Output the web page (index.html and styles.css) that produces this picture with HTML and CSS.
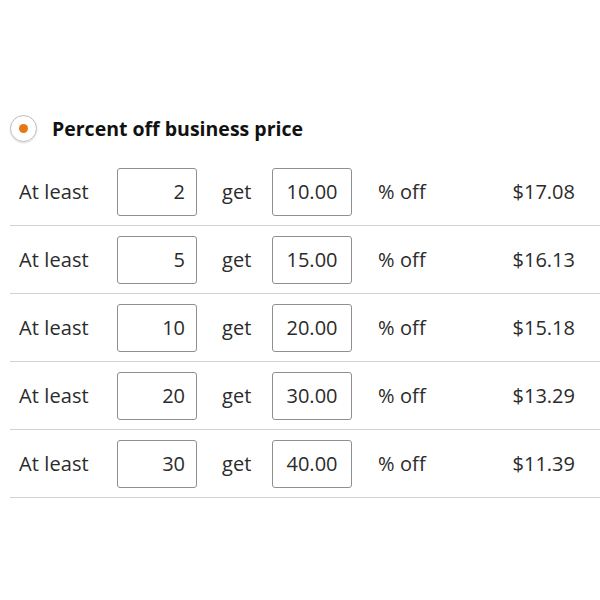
FILE: index.html
```html
<!DOCTYPE html>
<html lang="en">
<head>
  <meta charset="UTF-8">
  <title>Quantity discounts</title>
  <link rel="stylesheet" href="styles.css">
</head>
<body>
  <div class="panel">
    <label class="option">
      <span class="radio"><span class="dot"></span></span>
      <span class="option-title">Percent off business price</span>
    </label>

    <div class="tiers">
      <div class="tier">
        <span class="lbl">At least</span>
        <input class="box qty" type="text" value="2">
        <span class="lbl get">get</span>
        <input class="box pct" type="text" value="10.00">
        <span class="lbl off">% off</span>
        <span class="price">$17.08</span>
      </div>
      <div class="tier">
        <span class="lbl">At least</span>
        <input class="box qty" type="text" value="5">
        <span class="lbl get">get</span>
        <input class="box pct" type="text" value="15.00">
        <span class="lbl off">% off</span>
        <span class="price">$16.13</span>
      </div>
      <div class="tier">
        <span class="lbl">At least</span>
        <input class="box qty" type="text" value="10">
        <span class="lbl get">get</span>
        <input class="box pct" type="text" value="20.00">
        <span class="lbl off">% off</span>
        <span class="price">$15.18</span>
      </div>
      <div class="tier">
        <span class="lbl">At least</span>
        <input class="box qty" type="text" value="20">
        <span class="lbl get">get</span>
        <input class="box pct" type="text" value="30.00">
        <span class="lbl off">% off</span>
        <span class="price">$13.29</span>
      </div>
      <div class="tier">
        <span class="lbl">At least</span>
        <input class="box qty" type="text" value="30">
        <span class="lbl get">get</span>
        <input class="box pct" type="text" value="40.00">
        <span class="lbl off">% off</span>
        <span class="price">$11.39</span>
      </div>
    </div>
  </div>
</body>
</html>
```

FILE: styles.css
```css
body {
  margin: 0;
  background: #fff;
  font-family: "Open Sans", "Noto Sans", Arial, sans-serif;
  color: #2b2b2b;
}
.panel {
  padding: 114px 0 0 10px;
}
.option {
  display: flex;
  align-items: center;
  gap: 15px;
  height: 28px;
}
.radio {
  width: 27px;
  height: 27px;
  border: 1px solid #bdbdbd;
  border-radius: 50%;
  box-shadow: 0 1px 2px rgba(0, 0, 0, 0.15);
  display: flex;
  align-items: center;
  justify-content: center;
  box-sizing: border-box;
}
.dot {
  width: 9px;
  height: 9px;
  border-radius: 50%;
  background: #e47911;
}
.option-title {
  font-size: 19.5px;
  font-weight: 700;
  color: #111;
}
.tiers {
  margin-top: 16px;
}
.tier {
  display: grid;
  grid-template-columns: 98px 80px 25px 50px 80px 26px auto 1fr;
  align-items: center;
  height: 67px;
  padding-left: 9px;
  padding-right: 25px;
  border-bottom: 1px solid #d2d2d2;
}
.lbl {
  font-size: 20px;
  letter-spacing: 0.1px;
}
.box {
  width: 80px;
  height: 48px;
  box-sizing: border-box;
  border: 1px solid #8f8f8f;
  border-radius: 3px;
  padding: 0 11px;
  font: inherit;
  font-size: 20px;
  color: #2b2b2b;
  text-align: right;
  background: #fff;
}
.qty {
  grid-column: 2;
}
.get {
  grid-column: 4;
}
.pct {
  grid-column: 5;
  text-align: center;
  padding: 0;
}
.off {
  grid-column: 7;
}
.price {
  grid-column: 8;
  justify-self: end;
  font-size: 20px;
}
```
